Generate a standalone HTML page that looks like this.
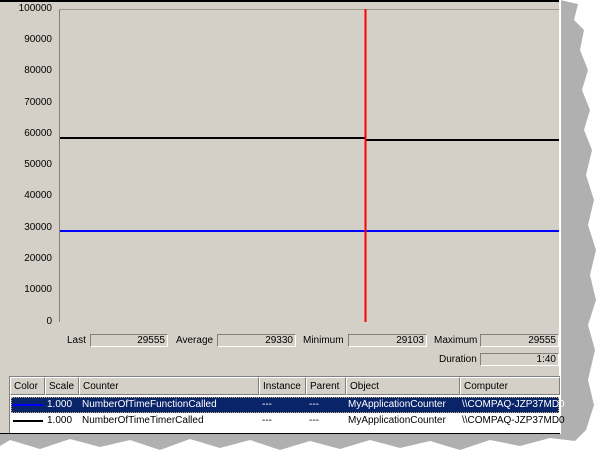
<!DOCTYPE html><html><head><style>
body{margin:0;width:607px;height:460px;background:#fff;position:relative;overflow:hidden;font-family:"Liberation Sans",sans-serif;font-size:10px;color:#000}
.a{position:absolute}
.yl{position:absolute;right:555px;width:50px;text-align:right;line-height:12px}
.box{position:absolute;background:#d4d0c8;border:1px solid;border-color:#808080 #fff #fff #808080;height:13px;line-height:12px;text-align:right;padding-right:2px;box-sizing:border-box}
.lb{position:absolute;line-height:13px}
.th{position:absolute;top:377px;height:18px;line-height:17px;border:1px solid;border-color:#fff #808080 #808080 #fff;box-sizing:border-box;padding-left:3px;background:#d4d0c8}
.c{position:absolute;line-height:16px;white-space:nowrap}
</style></head><body>
<svg class="a" style="left:0;top:0" width="607" height="460"><polygon points="560,0 578,4 574,20 584,30 580,50 588,70 582,90 590,110 584,130 592,150 586,175 594,200 588,225 596,250 590,275 596,300 588,325 595,350 588,380 594,405 586,430 575,441 550,438 520,446 490,440 460,450 430,441 400,448 370,440 340,449 310,441 280,450 250,440 220,448 190,439 160,450 130,440 100,447 70,439 40,449 10,440 0,446 0,434 560,434" fill="#b0b0b0"/></svg>
<div class="a" style="left:0;top:0;width:560px;height:434px;background:#d4d0c8;border-top:2px solid #000;box-sizing:border-box"></div>
<div class="a" style="left:559px;top:0;width:2px;height:434px;background:#fff"></div>
<div class="a" style="left:59px;top:9px;width:500px;height:313px;border-left:1px solid #808080;border-top:1px solid #a09c94;box-sizing:border-box"></div>
<div class="a" style="left:60px;top:137px;width:305px;height:2px;background:#000"></div>
<div class="a" style="left:365px;top:139px;width:194px;height:2px;background:#000"></div>
<div class="a" style="left:60px;top:230px;width:499px;height:2px;background:#00f"></div>
<svg class="a" style="left:364px;top:9px" width="3" height="313"><rect x="0.5" y="0" width="2" height="313" fill="#ff0000"/></svg>
<div class="yl" style="top:3px">100000</div><div class="yl" style="top:34px">90000</div><div class="yl" style="top:65px">80000</div><div class="yl" style="top:97px">70000</div><div class="yl" style="top:128px">60000</div><div class="yl" style="top:159px">50000</div><div class="yl" style="top:190px">40000</div><div class="yl" style="top:222px">30000</div><div class="yl" style="top:253px">20000</div><div class="yl" style="top:284px">10000</div><div class="yl" style="top:316px">0</div>
<div class="lb" style="left:67px;top:334px">Last</div><div class="box" style="left:90px;top:334px;width:78px">29555</div>
<div class="lb" style="left:176px;top:334px">Average</div><div class="box" style="left:217px;top:334px;width:79px">29330</div>
<div class="lb" style="left:303px;top:334px">Minimum</div><div class="box" style="left:348px;top:334px;width:79px">29103</div>
<div class="lb" style="left:434px;top:334px">Maximum</div><div class="box" style="left:480px;top:334px;width:79px">29555</div>
<div class="lb" style="left:439px;top:353px">Duration</div><div class="box" style="left:480px;top:353px;width:79px">1:40</div>
<div class="a" style="left:9px;top:376px;width:551px;height:58px;background:#fff;border-left:1px solid #808080;border-top:1px solid #808080;box-sizing:border-box"></div>
<div class="th" style="left:10px;width:35px">Color</div><div class="th" style="left:45px;width:34px">Scale</div><div class="th" style="left:79px;width:180px">Counter</div><div class="th" style="left:259px;width:47px">Instance</div><div class="th" style="left:306px;width:40px">Parent</div><div class="th" style="left:346px;width:114px">Object</div><div class="th" style="left:460px;width:100px">Computer</div>
<div class="a" style="left:11px;top:397px;width:548px;height:16px;background:#0a246a;outline:1px dotted #c8b070;outline-offset:-1px"></div>
<div class="a" style="left:13px;top:404px;width:30px;height:2px;background:#00f"></div>
<div class="a" style="left:13px;top:420px;width:30px;height:2px;background:#000"></div>
<div class="c" style="left:47px;top:397px;color:#fff">1.000</div><div class="c" style="left:82px;top:397px;color:#fff">NumberOfTimeFunctionCalled</div><div class="c" style="left:262px;top:397px;color:#fff">---</div><div class="c" style="left:309px;top:397px;color:#fff">---</div><div class="c" style="left:348px;top:397px;color:#fff">MyApplicationCounter</div><div class="c" style="left:462px;top:397px;color:#fff">\\COMPAQ-JZP37MD0</div>
<div class="c" style="left:47px;top:413px">1.000</div><div class="c" style="left:82px;top:413px">NumberOfTimeTimerCalled</div><div class="c" style="left:262px;top:413px">---</div><div class="c" style="left:309px;top:413px">---</div><div class="c" style="left:348px;top:413px">MyApplicationCounter</div><div class="c" style="left:462px;top:413px">\\COMPAQ-JZP37MD0</div>
<div class="a" style="left:0;top:433px;width:560px;height:1px;background:#000"></div>
</body></html>
